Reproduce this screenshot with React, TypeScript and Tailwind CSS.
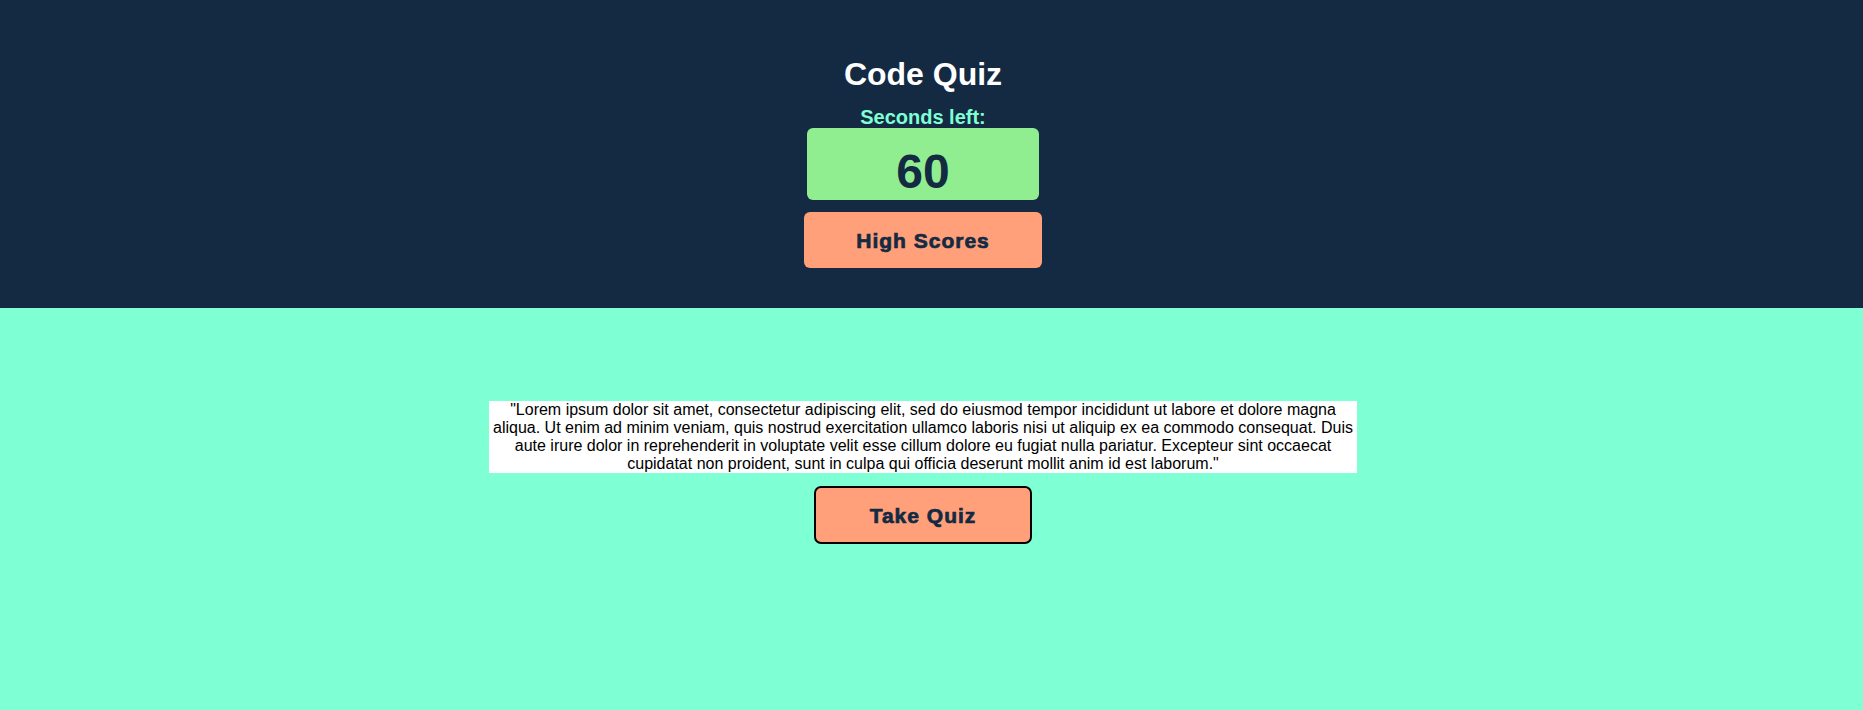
export default function App() {
  return (
    <div className="min-h-[710px] bg-[#7fffd4] font-['Liberation_Sans',Arial,sans-serif]">
      <header className="bg-[#132a42] pt-[56px] pb-[40px]">
        <div className="mr-[17px] flex flex-col items-center">
          <h1 className="text-[32px] font-bold leading-[37px] text-white">Code Quiz</h1>
          <p className="mt-[14px] text-[20px] font-bold leading-[21px] text-[#7fffd4]">
            Seconds left:
          </p>
          <div className="w-[232px] h-[72px] rounded-[6px] bg-[#90ee90] pt-[16px] text-center text-[48px] font-bold leading-[55px] text-[#132a42]">
            60
          </div>
          <button className="mt-[12px] w-[238px] h-[56px] rounded-[6px] bg-[#ffa07a] pt-[2px] text-[21px] font-bold tracking-[1px] text-[#132a42] [-webkit-text-stroke:0.7px_#132a42]">
            High Scores
          </button>
        </div>
      </header>
      <main className="mr-[17px] flex flex-col items-center pt-[93px]">
        <p className="w-[868px] bg-white text-center text-[16px] leading-[18px] text-black">
          "Lorem ipsum dolor sit amet, consectetur adipiscing elit, sed do eiusmod tempor incididunt ut
          labore et dolore magna aliqua. Ut enim ad minim veniam, quis nostrud exercitation ullamco laboris
          nisi ut aliquip ex ea commodo consequat. Duis aute irure dolor in reprehenderit in voluptate velit
          esse cillum dolore eu fugiat nulla pariatur. Excepteur sint occaecat cupidatat non proident, sunt
          in culpa qui officia deserunt mollit anim id est laborum."
        </p>
        <button className="mt-[13px] w-[218px] h-[58px] rounded-[7px] border-2 border-black bg-[#ffa07a] pt-[2px] text-[21px] font-bold tracking-[1px] text-[#132a42] [-webkit-text-stroke:0.7px_#132a42]">
          Take Quiz
        </button>
      </main>
    </div>
  );
}
